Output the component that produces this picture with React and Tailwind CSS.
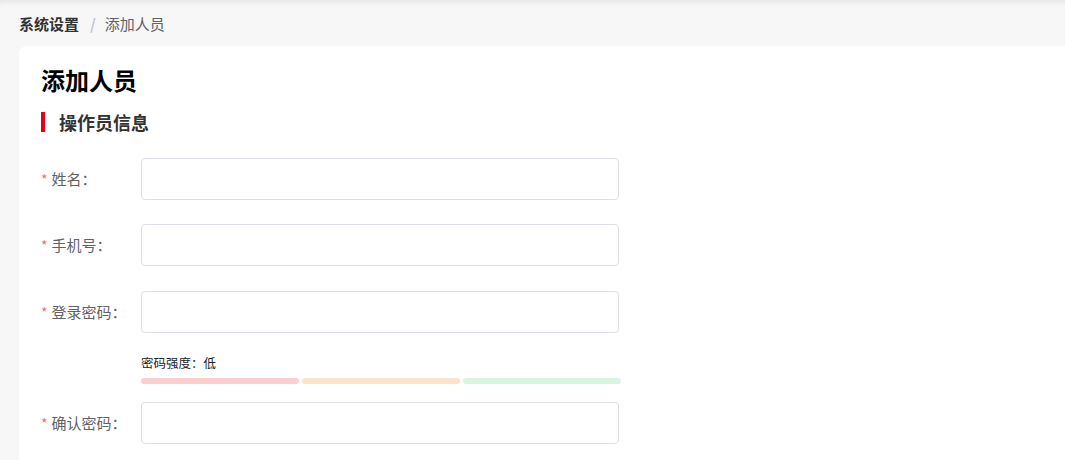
import React from "react";

const font = { fontFamily: '"Noto Sans CJK SC", "Noto Sans", sans-serif' };

function Row({ label }) {
  return (
    <div className="flex items-center h-[42px]">
      <div className="w-[100px] text-[15px] text-[#606266] flex items-center">
        <span className="text-[#f56c6c] mr-[4px] text-[14px]">*</span>
        <span>{label}：</span>
      </div>
      <div className="w-[478px] h-[42px] rounded-[4px] border border-[#dcdfe6] bg-white" />
    </div>
  );
}

export default function App() {
  return (
    <div
      className="w-[1065px] h-[460px] overflow-hidden bg-[#f7f7f7] shadow-[inset_0_6px_6px_-4px_rgba(0,0,0,0.08)]"
      style={font}
    >
      <div className="h-[46px] pl-[19px] flex items-center text-[15px] leading-none">
        <span className="font-bold text-[#303133]">系统设置</span>
        <span className="ml-[11px] mr-[9px] text-[#c0c4cc] font-bold">/</span>
        <span className="text-[#606266]">添加人员</span>
      </div>
      <div className="ml-[19px] w-[1100px] h-[500px] bg-white rounded-tl-[8px] pl-[22px] pt-[18px]">
        <div className="text-[24px] font-bold text-black leading-[32px]">添加人员</div>
        <div className="mt-[16px] flex items-center h-[20px]">
          <div className="w-[4px] h-[20px] bg-[#e60012]" />
          <div className="ml-[14px] text-[18px] font-bold text-[#333] leading-none">操作员信息</div>
        </div>
        <div className="mt-[26px] flex flex-col">
          <Row label="姓名" />
          <div className="h-[24px]" />
          <Row label="手机号" />
          <div className="h-[25px]" />
          <Row label="登录密码" />
          <div className="pl-[100px] pt-[22px]">
            <div className="text-[12.5px] text-[#222] leading-[16px]">密码强度：低</div>
            <div className="mt-[7px] flex gap-[3px] w-[480px]">
              <div className="flex-1 h-[6px] rounded-full bg-[#fccfcf]" />
              <div className="flex-1 h-[6px] rounded-full bg-[#fee2c9]" />
              <div className="flex-1 h-[6px] rounded-full bg-[#d9f5df]" />
            </div>
          </div>
          <div className="h-[18px]" />
          <Row label="确认密码" />
        </div>
      </div>
    </div>
  );
}
